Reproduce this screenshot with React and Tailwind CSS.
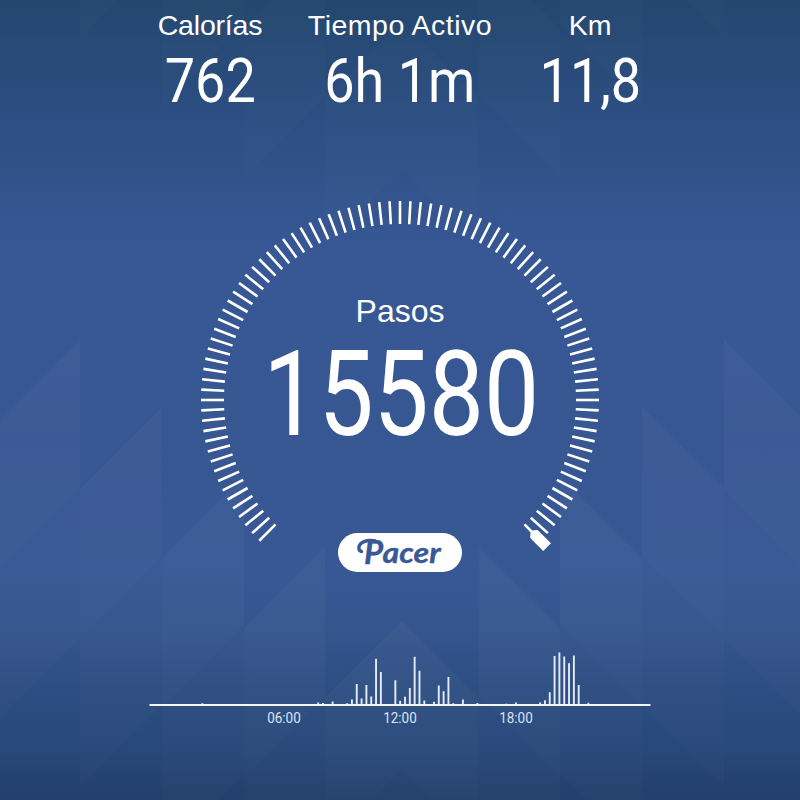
const stats = [
    { label: 'Calorías', value: '762', tracking: 'tracking-[-0.2px]' },
    { label: 'Tiempo Activo', value: '6h 1m', tracking: 'tracking-[0.5px]' },
    { label: 'Km', value: '11,8', tracking: 'tracking-normal' },
];

// one tick every 3 degrees, from -225 to 45
const ticks = Array.from({ length: 91 }, (_, i) => -225 + i * 3);

// [slot, height] for each ten minute slot with activity
const activity = [
    [0, 1.3], [24, 2], [25, 1.5], [27, 3], [30, 1.3], [31, 5], [32, 20.5], [33, 6], [34, 19.5],
    [35, 8], [36, 45.7], [37, 32.5], [40, 24.3], [41, 3.7], [42, 7.8], [43, 16.5], [44, 47.7],
    [45, 33.7], [46, 4], [48, 2.7], [49, 19], [50, 13.3], [51, 27.5], [52, 1.3], [54, 5],
    [57, 1.5], [63, 0.8], [65, 2], [70, 2], [71, 4.2], [72, 12.3], [73, 48.5], [74, 52],
    [75, 48], [76, 41.3], [77, 49], [78, 19.5], [80, 1.7],
];

// left half of the chevrons: column edges and where the light band starts at the left edge
const columns = [
    { x1: 0, x2: 80, y: 420 },
    { x1: 80, x2: 162, y: 489 },
    { x1: 162, x2: 244, y: 558 },
    { x1: 244, x2: 325, y: 628 },
    { x1: 325, x2: 402, y: 698 },
];

const slant = (x1, x2, top, height) =>
    `${x1},${top} ${x2},${top - (x2 - x1)} ${x2},${top - (x2 - x1) + height} ${x1},${top + height}`;

const Chevrons = () => (
    <g>
        {columns.map(({ x1, x2, y }) => (
            <g key={x1}>
                <polygon points={slant(x1, x2, y, 149)} fill="url(#band)" />
                <polygon points={slant(x1, x2, y + 149, 149)} fill="#fff" fillOpacity="0.014" />
                <polygon points={slant(x1, x2, y - 600, 149)} fill="#fff" fillOpacity="0.013" />
            </g>
        ))}
    </g>
);

const Background = () => (
    <svg className="absolute inset-0" width="800" height="800" viewBox="0 0 800 800" aria-hidden="true">
        <defs>
            <linearGradient id="band" x1="0" y1="0" x2="0" y2="1">
                <stop offset="0" stopColor="#fff" stopOpacity="0.03" />
                <stop offset="1" stopColor="#fff" stopOpacity="0.022" />
            </linearGradient>
        </defs>
        <Chevrons />
        <g transform="translate(804 0) scale(-1 1)">
            <Chevrons />
        </g>
    </svg>
);

const Dial = () => (
    <svg className="absolute inset-0" width="400" height="380" viewBox="-200 -200 400 380">
        {ticks.map((angle) => (
            <line
                key={angle}
                x1="176"
                x2="199"
                y1="0"
                y2="0"
                stroke="#fff"
                strokeWidth="2.6"
                transform={`rotate(${angle})`}
            />
        ))}
        {/* Pointer */}
        <path
            d="M186 -1.3L188.5 -4.5Q189.5 -5.5 191 -5.5L208 -5.5L208 5.5L191 5.5Q189.5 5.5 188.5 4.5L186 1.3Z"
            transform="rotate(45)"
            fill="#fff"
        />
    </svg>
);

const Logo = () => (
    <div className="mt-[96px] h-[39px] w-[124px] rounded-full bg-white">
        <svg className="overflow-visible" width="124" height="39" viewBox="0 0 124 39">
            <path
                d="M23.5 18.5C19.5 17.5 20 11 25.5 8.8C29 7.4 33 7.2 37 8"
                fill="none"
                stroke="#3a5896"
                strokeWidth="3.4"
                strokeLinecap="round"
            />
            <text
                fill="#3a5896"
                stroke="#3a5896"
                strokeWidth="0.4"
                strokeLinejoin="round"
                className="font-['Lato',sans-serif] font-bold italic"
            >
                <tspan x="26" y="31" fontSize="33">P</tspan>
                <tspan x="44.5" y="30" fontSize="28" textLength="58" lengthAdjust="spacingAndGlyphs">acer</tspan>
            </text>
        </svg>
    </div>
);

const ActivityChart = () => (
    <div className="flex flex-col items-center pt-[70px]">
        <svg width="502" height="56" viewBox="149 650 502 56">
            {activity.map(([slot, height]) => (
                <rect
                    key={slot}
                    x={201.4 + slot * 4.825}
                    y={704.5 - height}
                    width="1.9"
                    height={height}
                    fill="#e3ebf8"
                />
            ))}
            <rect x="149.5" y="704" width="501" height="2" fill="#f3f7fd" />
        </svg>
        <div className="mt-[2px] grid w-[348px] grid-cols-3 text-center font-['Roboto',sans-serif] text-[15.5px] leading-5 text-[#dbe5f6]">
            <span className="scale-x-[0.87]">06:00</span>
            <span className="scale-x-[0.87]">12:00</span>
            <span className="scale-x-[0.87]">18:00</span>
        </div>
    </div>
);

const App = () => {
    return (
        <div className="relative h-[800px] w-[800px] overflow-hidden bg-[linear-gradient(180deg,#24476f_0px,#284b7a_65px,#2d4f84_130px,#34558f_210px,#375895_260px,#375793_420px,#375894_570px,#34558e_630px,#2c4d80_700px,#27487a_750px,#233f6b_800px)] font-['Liberation_Sans',Arial,sans-serif] text-white">
            <Background />
            <div className="relative flex flex-col items-center">
                {/* Stats */}
                <div className="grid h-[200px] w-[570px] grid-cols-3 pt-[9px]">
                    {stats.map(({ label, value, tracking }) => (
                        <div key={label} className="flex flex-col items-center gap-[8px] whitespace-nowrap">
                            <span className={`text-[28.5px] leading-8 ${tracking}`}>{label}</span>
                            <span className="scale-x-[0.87] font-['Roboto',sans-serif] text-[62px] leading-[64px] [font-kerning:none]">
                                {value}
                            </span>
                        </div>
                    ))}
                </div>

                {/* Dial */}
                <div className="relative h-[380px] w-[400px]">
                    <Dial />
                    <div className="relative flex flex-col items-center pt-[91px]">
                        <span className="text-[32px] leading-10">Pasos</span>
                        <span className="mt-[22px] ml-[2px] scale-x-[0.825] font-['Roboto',sans-serif] text-[119px] leading-[84px] [font-kerning:none]">
                            15580
                        </span>
                        <Logo />
                    </div>
                </div>

                <ActivityChart />
            </div>
        </div>
    );
};

export default App;
